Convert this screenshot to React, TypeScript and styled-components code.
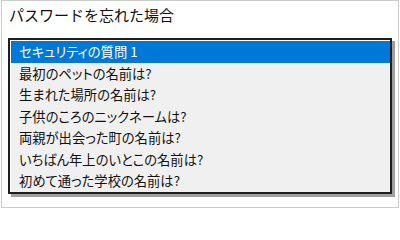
import React from "react";
import styled, { createGlobalStyle } from "styled-components";

const Global = createGlobalStyle`
  html, body { margin: 0; padding: 0; background: #ffffff; }
  body { width: 400px; height: 209px; overflow: hidden; }
`;

const Frame = styled.div`
  box-sizing: border-box;
  width: 398px;
  height: 208px;
  margin-left: 1px;
  border: 1px solid #cccccc;
  padding: 3px 6px 0 6px;
  display: flex;
  flex-direction: column;
  font-family: "Noto Sans CJK JP", "Noto Sans", sans-serif;
`;

const Title = styled.div`
  height: 22px;
  line-height: 22px;
  font-size: 15px;
  color: #111111;
  padding-left: 1px;
`;

const ListBox = styled.div`
  box-sizing: border-box;
  margin-top: 12px;
  height: 156px;
  border: 2px solid #1e1e1e;
  box-shadow: 3px 3px 0 #a0a0a0;
  background: #ffffff;
  display: flex;
`;

const ListInner = styled.ul`
  flex: 1;
  margin: 1px 0 0 1px;
  padding: 0;
  list-style: none;
  background: #f0f0f0;
`;

const Item = styled.li<{ $selected?: boolean }>`
  height: 21.5px;
  line-height: 21.5px;
  padding-left: 8px;
  font-size: 13.3px;
  font-feature-settings: "palt";
  white-space: nowrap;
  background: ${(p) => (p.$selected ? "#0078d7" : "transparent")};
  color: ${(p) => (p.$selected ? "#ffffff" : "#111111")};
`;

const items = [
  "セキュリティの質問 1",
  "最初のペットの名前は?",
  "生まれた場所の名前は?",
  "子供のころのニックネームは?",
  "両親が出会った町の名前は?",
  "いちばん年上のいとこの名前は?",
  "初めて通った学校の名前は?",
];

export default function App() {
  return (
    <>
      <Global />
      <Frame>
        <Title>パスワードを忘れた場合</Title>
        <ListBox>
          <ListInner>
            {items.map((t, i) => (
              <Item key={t} $selected={i === 0}>
                {t}
              </Item>
            ))}
          </ListInner>
        </ListBox>
      </Frame>
    </>
  );
}
